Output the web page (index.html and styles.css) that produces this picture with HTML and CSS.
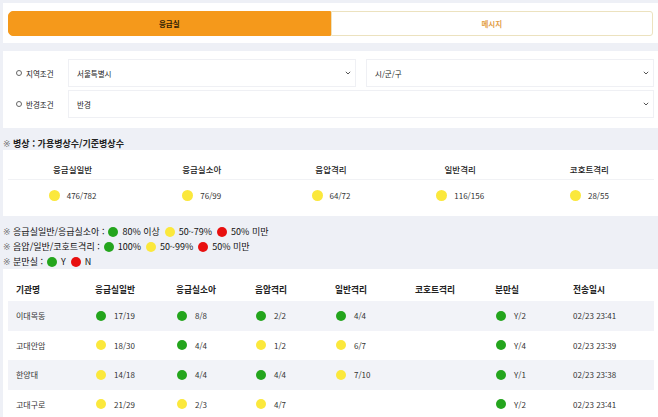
FILE: index.html
```html
<!DOCTYPE html>
<html lang="ko">
<head>
<meta charset="utf-8">
<title>응급실</title>
<link rel="stylesheet" href="styles.css">
</head>
<body>
<div class="page">
  <section class="card tabs-card">
    <div class="tabs">
      <div class="tab tab-active">응급실</div>
      <div class="tab tab-idle">메시지</div>
    </div>
  </section>

  <section class="card filter-card">
    <div class="filter-row">
      <div class="flabel"><span class="radio"></span>지역조건</div>
      <div class="selects">
        <div class="select"><span>서울특별시</span><svg class="chev" width="6" height="4" viewBox="0 0 6 4"><path d="M0.8 0.8 L3 3 L5.2 0.8" fill="none" stroke="#555" stroke-width="1"/></svg></div>
        <div class="select"><span>시/군/구</span><svg class="chev" width="6" height="4" viewBox="0 0 6 4"><path d="M0.8 0.8 L3 3 L5.2 0.8" fill="none" stroke="#555" stroke-width="1"/></svg></div>
      </div>
    </div>
    <div class="filter-row">
      <div class="flabel"><span class="radio"></span>반경조건</div>
      <div class="selects">
        <div class="select"><span>반경</span><svg class="chev" width="6" height="4" viewBox="0 0 6 4"><path d="M0.8 0.8 L3 3 L5.2 0.8" fill="none" stroke="#555" stroke-width="1"/></svg></div>
      </div>
    </div>
  </section>

  <div class="note"><span class="ref">※</span> 병상 : 가용병상수/기준병상수</div>

  <section class="card summary">
    <div class="sum-grid">
      <div class="sum-head">응급실일반</div>
      <div class="sum-head">응급실소아</div>
      <div class="sum-head">음압격리</div>
      <div class="sum-head">일반격리</div>
      <div class="sum-head">코호트격리</div>
      <div class="sum-val"><span class="dot big y"></span><span>476/782</span></div>
      <div class="sum-val"><span class="dot big y"></span><span>76/99</span></div>
      <div class="sum-val"><span class="dot big y"></span><span>64/72</span></div>
      <div class="sum-val"><span class="dot big y"></span><span>116/156</span></div>
      <div class="sum-val"><span class="dot big y"></span><span>28/55</span></div>
    </div>
  </section>

  <div class="legend">
    <div class="lline"><span><span class="ref">※</span> 응급실일반/응급실소아 :</span><span class="dot g"></span><span class="lt">80% 이상</span><span class="dot y"></span><span class="lt">50~79%</span><span class="dot r"></span><span class="lt">50% 미만</span></div>
    <div class="lline"><span><span class="ref">※</span> 음압/일반/코호트격리 :</span><span class="dot g"></span><span class="lt">100%</span><span class="dot y"></span><span class="lt">50~99%</span><span class="dot r"></span><span class="lt">50% 미만</span></div>
    <div class="lline"><span><span class="ref">※</span> 분만실 :</span><span class="dot g"></span><span class="lt">Y</span><span class="dot r"></span><span class="lt">N</span></div>
  </div>

  <section class="card table-card">
    <div class="trow thead">
      <div class="th">기관명</div>
      <div class="th">응급실일반</div>
      <div class="th">응급실소아</div>
      <div class="th">음압격리</div>
      <div class="th">일반격리</div>
      <div class="th">코호트격리</div>
      <div class="th">분만실</div>
      <div class="th">전송일시</div>
    </div>
    <div class="trow alt">
      <div class="td name">이대목동</div>
      <div class="td"><span class="dot g"></span>17/19</div>
      <div class="td"><span class="dot g"></span>8/8</div>
      <div class="td"><span class="dot g"></span>2/2</div>
      <div class="td"><span class="dot g"></span>4/4</div>
      <div class="td"></div>
      <div class="td"><span class="dot g"></span>Y/2</div>
      <div class="td time">02/23 23:41</div>
    </div>
    <div class="trow">
      <div class="td name">고대안암</div>
      <div class="td"><span class="dot y"></span>18/30</div>
      <div class="td"><span class="dot g"></span>4/4</div>
      <div class="td"><span class="dot y"></span>1/2</div>
      <div class="td"><span class="dot y"></span>6/7</div>
      <div class="td"></div>
      <div class="td"><span class="dot g"></span>Y/4</div>
      <div class="td time">02/23 23:39</div>
    </div>
    <div class="trow alt">
      <div class="td name">한양대</div>
      <div class="td"><span class="dot y"></span>14/18</div>
      <div class="td"><span class="dot g"></span>4/4</div>
      <div class="td"><span class="dot g"></span>4/4</div>
      <div class="td"><span class="dot y"></span>7/10</div>
      <div class="td"></div>
      <div class="td"><span class="dot g"></span>Y/1</div>
      <div class="td time">02/23 23:38</div>
    </div>
    <div class="trow">
      <div class="td name">고대구로</div>
      <div class="td"><span class="dot y"></span>21/29</div>
      <div class="td"><span class="dot y"></span>2/3</div>
      <div class="td"><span class="dot y"></span>4/7</div>
      <div class="td"></div>
      <div class="td"></div>
      <div class="td"><span class="dot g"></span>Y/2</div>
      <div class="td time">02/23 23:41</div>
    </div>
  </section>
</div>
</body>
</html>
```

FILE: styles.css
```css
* { box-sizing: border-box; }

body {
  margin: 0;
  background: #eef0f6;
  font-family: "Noto Sans CJK KR", "Noto Sans", sans-serif;
  color: #333;
}

.page {
  padding: 3px 0 0 3px;
}

.card {
  background: #ffffff;
}

.ref {
  font-family: "DejaVu Sans", "Noto Sans CJK JP", sans-serif;
  font-variant-emoji: text;
  font-weight: 400;
  color: #777;
}

/* tabs */
.tabs-card {
  height: 40px;
  padding: 8px 5px 7px 5px;
}
.tabs {
  display: flex;
  height: 25px;
}
.tab {
  flex: 1;
  display: flex;
  align-items: center;
  justify-content: center;
  font-size: 7.5px;
  font-weight: 700;
  border: 1px solid;
}
.tab-active {
  background: #f5991b;
  border-color: #f5991b;
  color: #2e1d06;
  border-radius: 5px 0 0 5px;
}
.tab-idle {
  background: #ffffff;
  border-color: #ece2bf;
  color: #e39f4a;
  border-radius: 0 3px 3px 0;
}

/* filters */
.filter-card {
  margin-top: 8px;
  padding: 8px 4px 10px 13px;
  display: flex;
  flex-direction: column;
  gap: 3px;
}
.filter-row {
  display: flex;
  align-items: center;
  height: 28px;
}
.flabel {
  width: 52px;
  display: flex;
  align-items: center;
  gap: 4px;
  font-size: 7.5px;
  color: #222;
}
.radio {
  width: 6px;
  height: 6px;
  border: 1px solid #666;
  border-radius: 50%;
}
.selects {
  flex: 1;
  height: 100%;
  display: flex;
  gap: 10px;
}
.select {
  flex: 1;
  display: flex;
  align-items: center;
  justify-content: space-between;
  padding: 0 4px 0 8px;
  border: 1px solid #eff0f4;
  font-size: 7.5px;
  color: #222;
}

/* note */
.note {
  height: 22px;
  padding-top: 10px;
  line-height: 12px;
  font-size: 9px;
  font-weight: 700;
  color: #222;
}

/* summary */
.summary {
  padding: 8px 4px 6px 5px;
}
.sum-grid {
  display: grid;
  grid-template-columns: repeat(5, 1fr);
}
.sum-head {
  height: 22px;
  display: flex;
  align-items: center;
  justify-content: center;
  font-size: 8.5px;
  font-weight: 500;
  color: #222;
  border-bottom: 1px solid #f1f2f5;
}
.sum-val {
  height: 30px;
  display: flex;
  align-items: center;
  justify-content: center;
  gap: 7px;
  font-size: 8px;
  color: #333;
}

/* dots */
.dot {
  display: inline-block;
  flex: none;
  width: 10px;
  height: 10px;
  border-radius: 50%;
}
.dot.big {
  width: 11px;
  height: 11px;
}
.g { background: #24a51d; }
.y { background: #fbe83c; }
.r { background: #e80f0f; }

/* legend */
.legend {
  padding-top: 8px;
  font-size: 9px;
  color: #111;
}
.lline {
  height: 15px;
  display: flex;
  align-items: center;
  gap: 4px;
}
.lt {
  margin-right: 1px;
}

/* table */
.table-card {
  padding: 8px 4px 0 5px;
}
.trow {
  display: grid;
  grid-template-columns: 79px 81px 79px 80px 80px 80px 78px 1fr;
  height: 29.5px;
  align-items: center;
}
.trow.thead {
  height: 24px;
}
.trow.alt {
  background: #f2f3f8;
}
.th {
  padding-left: 8px;
  font-size: 8.7px;
  font-weight: 700;
  color: #222;
}
.td {
  padding-left: 8px;
  display: flex;
  align-items: center;
  gap: 8px;
  font-size: 8px;
  color: #333;
}
.td .dot {
  margin-left: 1px;
}
.td.name {
  color: #333;
}
```
